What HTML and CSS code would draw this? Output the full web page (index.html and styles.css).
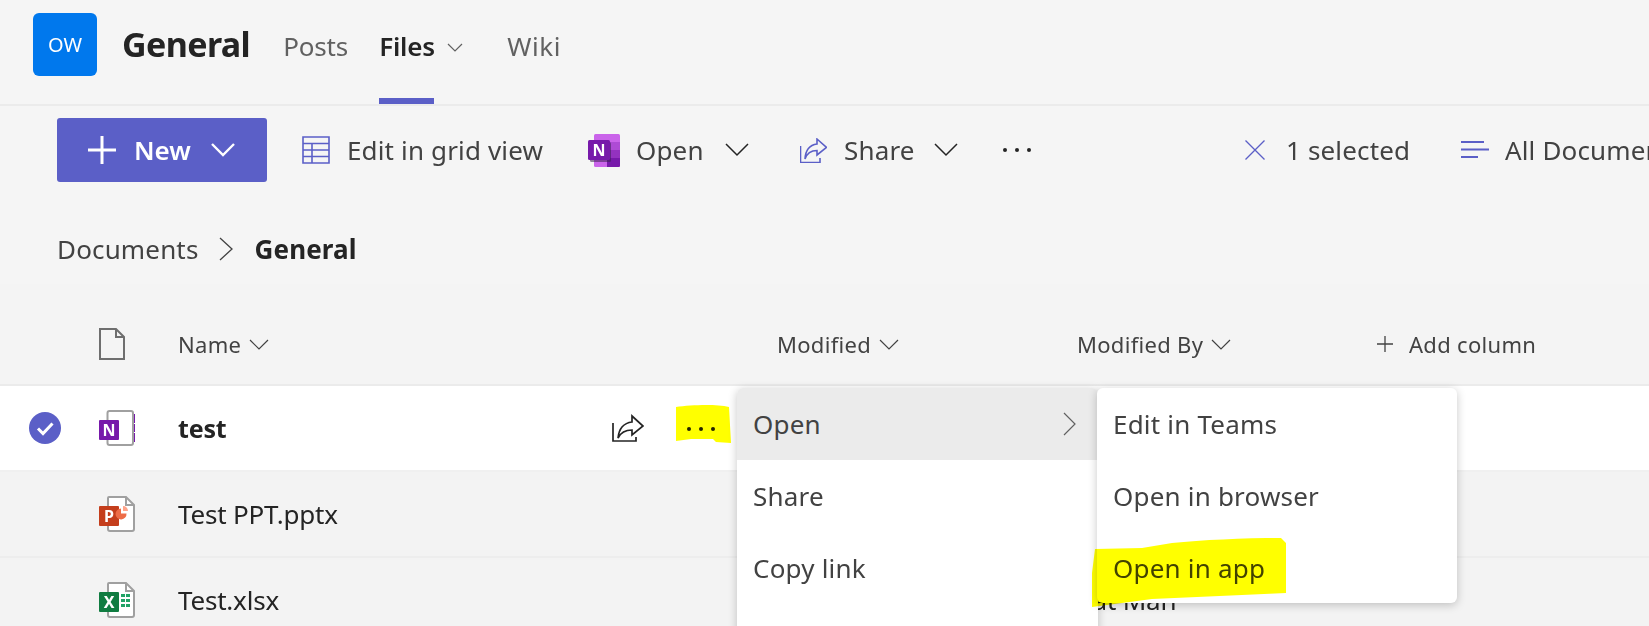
FILE: index.html
```html
<!DOCTYPE html>
<html lang="en">
<head>
<meta charset="utf-8">
<title>General - Files</title>
<link rel="stylesheet" href="styles.css">
</head>
<body>
<div class="page">
  <header class="tabs">
    <div class="avatar">OW</div>
    <h1 class="channel">General</h1>
    <nav class="tablist">
      <a class="tab tab-posts">Posts</a>
      <a class="tab tab-files">Files
        <svg class="tab-chevron" viewBox="0 0 16 9"><path d="M1 1l7 7 7-7"/></svg>
      </a>
      <a class="tab tab-wiki">Wiki</a>
    </nav>
  </header>

  <div class="toolbar">
    <button class="new-btn">
      <svg class="new-plus" viewBox="0 0 28 28"><path d="M14 0v28M0 14h28"/></svg>
      <span>New</span>
      <svg class="new-chevron" viewBox="0 0 24 14"><path d="M1 1l11 11L23 1"/></svg>
    </button>
    <div class="cmd cmd-grid">
      <svg class="ic-grid" viewBox="0 0 28 28"><path d="M1 1h26v26H1zM1 7.500h26M1 14h26M1 20.500h26M10 7.500V27"/></svg>
      <span>Edit in grid view</span>
    </div>
    <div class="cmd cmd-open">
      <svg class="ic-onenote" viewBox="0 0 32 33">
        <rect x="6" y="0" width="26" height="33" rx="1.500" fill="#ca64ea"/>
        <rect x="19" y="8" width="13" height="8" fill="#ae4bd5"/>
        <rect x="19" y="16" width="13" height="8" fill="#9332bf"/>
        <path d="M19 24h13v7.500a1.500 1.500 0 0 1-1.500 1.500H19z" fill="#7719aa"/>
        <rect x="2" y="8" width="21" height="20" rx="1.500" fill="#3a2050" opacity=".55"/>
        <rect x="0" y="6" width="22" height="20" rx="1.500" fill="#7719aa"/>
        <text class="badge-letter" x="11" y="22">N</text>
      </svg>
      <span>Open</span>
      <svg class="ic-chev" viewBox="0 0 24 14"><path d="M1 1l11 11L23 1"/></svg>
    </div>
    <div class="cmd cmd-share">
      <svg class="ic-share" viewBox="0 0 27 25"><path d="M.5 8v16.500H20V20M17 1l9.500 8.500L17 17v-4.500c-6 0-10 2.500-12 8.500 .5-9 5-14 12-15z"/></svg>
      <span>Share</span>
      <svg class="ic-chev" viewBox="0 0 24 14"><path d="M1 1l11 11L23 1"/></svg>
    </div>
    <div class="dots dots-bar"><i></i><i></i><i></i></div>
    <div class="cmd cmd-selected">
      <svg class="ic-x" viewBox="0 0 20 20"><path d="M.5.5l19 19M19.500.5l-19 19"/></svg>
      <span>1 selected</span>
    </div>
    <div class="cmd cmd-view">
      <svg class="ic-lines" viewBox="0 0 28 18"><path d="M0 1h23M0 8.500h28M0 16h17"/></svg>
      <span>All Documents</span>
    </div>
  </div>

  <div class="crumbs">
    <span>Documents</span>
    <svg class="crumb-sep" viewBox="0 0 14 24"><path d="M1 1l12 11L1 23"/></svg>
    <strong>General</strong>
  </div>

  <div class="grid grid-head">
    <div class="cell-check"></div>
    <div class="cell-icon">
      <svg class="ic-doc" viewBox="0 0 26 32"><path d="M1 1h16l8 8v22H1zM17 1v8h8"/></svg>
    </div>
    <div class="col">Name <svg class="col-chev" viewBox="0 0 20 11"><path d="M1 1l9 9 9-9"/></svg></div>
    <div class="col">Modified <svg class="col-chev" viewBox="0 0 20 11"><path d="M1 1l9 9 9-9"/></svg></div>
    <div class="col">Modified By <svg class="col-chev" viewBox="0 0 20 11"><path d="M1 1l9 9 9-9"/></svg></div>
    <div class="col col-add"><svg class="col-plus" viewBox="0 0 16 16"><path d="M8 0v16M0 8h16"/></svg> Add column</div>
  </div>

  <div class="grid row row-selected">
    <div class="cell-check">
      <svg class="ic-check" viewBox="0 0 32 32"><circle cx="16" cy="16" r="16" fill="#5b5fc7"/><path d="M9 16.500l5 5 9.500-10" fill="none" stroke="#fff" stroke-width="3"/></svg>
    </div>
    <div class="cell-icon">
      <svg class="ic-file" viewBox="0 0 36 36">
        <path d="M34 4h2v9h-2zM34 14h2v8h-2zM34 23h2v9h-2z" fill="#7719aa"/>
        <rect x="8.500" y="1" width="25.500" height="34" rx="2" fill="#fff" stroke="#a0a0a0" stroke-width="2"/>
        <rect x="0" y="10" width="20" height="20" rx="1" fill="#7719aa"/>
        <text class="badge-letter" x="10" y="26">N</text>
      </svg>
    </div>
    <div class="name-cell">
      <div class="name name-strong">test</div>
      <svg class="ic-share-dark" viewBox="0 0 32 28"><path d="M1 9v18h23v-4M20 2l11 10-11 9v-5c-7 0-11 2-14 8 1-10 6-15 14-16z"/></svg>
      <div class="dots dots-row"><i></i><i></i><i></i></div>
    </div>
    <div></div>
    <div></div>
  </div>

  <div class="grid row">
    <div class="cell-check"></div>
    <div class="cell-icon">
      <svg class="ic-file" viewBox="0 0 36 36">
        <path d="M9 2a1 1 0 0 1 1-1h17l8 8v24a2 2 0 0 1-2 2H11a2 2 0 0 1-2-2z" fill="#fff" stroke="#a0a0a0" stroke-width="2"/>
        <path d="M27 1v8h8" fill="none" stroke="#a0a0a0" stroke-width="2"/>
        <rect x="0" y="10" width="20" height="20" rx="1" fill="#c43e1c"/>
        <text class="badge-letter" x="10" y="26">P</text>
        <path d="M27.500 17.500a5.500 5.500 0 1 1-5.500-5v5z" fill="#ed6c47"/>
        <path d="M24 10a5 5 0 0 1 5 5h-5z" fill="#ffa48a"/>
      </svg>
    </div>
    <div class="name">Test PPT.pptx</div>
    <div></div><div></div><div></div>
  </div>

  <div class="grid row">
    <div class="cell-check"></div>
    <div class="cell-icon">
      <svg class="ic-file" viewBox="0 0 36 36">
        <path d="M9 2a1 1 0 0 1 1-1h17l8 8v24a2 2 0 0 1-2 2H11a2 2 0 0 1-2-2z" fill="#fff" stroke="#a0a0a0" stroke-width="2"/>
        <path d="M27 1v8h8" fill="none" stroke="#a0a0a0" stroke-width="2"/>
        <rect x="0" y="10" width="20" height="20" rx="1" fill="#107c41"/>
        <text class="badge-letter" x="10" y="26">X</text>
        <path d="M22 12h4v3h-4zM27 12h4v3h-4zM22 17h4v3h-4zM27 17h4v3h-4zM22 22h4v3h-4zM27 22h4v3h-4z" fill="#21a366"/>
      </svg>
    </div>
    <div class="name">Test.xlsx</div>
    <div></div>
    <div class="name">Pat Man</div>
    <div></div>
  </div>

  <svg class="mark mark-dots" viewBox="0 0 55 38"><path d="M0 2C15 0 40-1 53 2L55 38 40 37 37 34H15L0 36z"/></svg>

  <ul class="menu menu-main">
    <li class="item item-active">Open
      <svg class="item-chev" viewBox="0 0 13 24"><path d="M1 1l11 11L1 23"/></svg>
    </li>
    <li class="item">Share</li>
    <li class="item">Copy link</li>
    <li class="item"></li>
  </ul>

  <ul class="menu menu-sub">
    <li class="item">Edit in Teams</li>
    <li class="item">Open in browser</li>
    <li class="item">Open in app</li>
  </ul>

  <svg class="mark mark-app" viewBox="0 0 194 70"><path d="M3 12 50 11 80 6C110 3 150 1 189 1L194 6V56L150 58 60 62 30 66 0 70V36z"/></svg>
</div>
</body>
</html>
```
FILE: styles.css
```css
* { box-sizing: border-box; }
html, body { margin: 0; padding: 0; }
body {
  width: 1649px;
  height: 626px;
  overflow: hidden;
  background: #f5f5f5;
  font-family: "Noto Sans", "Open Sans", sans-serif;
  color: #424242;
}
svg { display: block; flex: none; fill: none; }
.page { position: relative; width: 1649px; height: 626px; overflow: hidden; }

.tabs {
  display: flex;
  height: 106px;
  padding: 13px 0 0 33px;
  border-bottom: 2px solid #ebebeb;
}
.avatar {
  width: 64px;
  height: 63px;
  border-radius: 6px;
  background: #0078ed;
  color: #fff;
  font-size: 20px;
  line-height: 63px;
  text-align: center;
}
.channel {
  margin: 2px 0 0 25px;
  font-size: 34px;
  font-weight: 700;
  line-height: 58px;
  color: #242424;
  letter-spacing: -.6px;
}
.tablist { display: flex; height: 91px; margin-left: 33px; }
.tab {
  display: block;
  height: 91px;
  font-size: 26px;
  line-height: 67px;
  color: #616161;
  white-space: nowrap;
  letter-spacing: -.2px;
}
.tab-posts { width: 96px; }
.tab-files {
  position: relative;
  display: flex;
  width: 128px;
  color: #242424;
  font-weight: 600;
  gap: 12px;
}
.tab-files::after {
  content: "";
  position: absolute;
  left: 0;
  bottom: 0;
  width: 55px;
  height: 6px;
  background: #5b5fc7;
}
.tab-chevron { width: 16px; height: 9px; margin-top: 30px; stroke: #616161; stroke-width: 1.200; }
.tab-wiki { letter-spacing: .6px; }

.toolbar {
  display: flex;
  align-items: center;
  height: 64px;
  margin-top: 12px;
  padding-left: 57px;
  font-size: 26px;
  white-space: nowrap;
}
.toolbar > * { flex: none; }
.new-btn {
  display: flex;
  align-items: center;
  width: 210px;
  height: 64px;
  padding: 0 0 0 31px;
  border: 0;
  border-radius: 3px;
  background: #5b5fc7;
  color: #fff;
  font: 600 26px "Noto Sans", sans-serif;
}
.new-plus { width: 28px; height: 28px; stroke: #fff; stroke-width: 3; }
.new-btn span { margin-left: 18px; width: 59px; text-align: left; }
.new-chevron { width: 24px; height: 14px; margin-left: 18px; stroke: #fff; stroke-width: 2.400; }

.cmd { display: flex; align-items: center; letter-spacing: .15px; }
.cmd-grid { margin-left: 35px; width: 286px; }
.ic-grid { width: 28px; height: 28px; stroke: #5b5fc7; stroke-width: 1.600; margin-right: 17px; }
.cmd-open { width: 212px; }
.ic-onenote { width: 32px; height: 33px; margin-right: 16px; }
.badge-letter {
  fill: #fff;
  font: 700 16px "Noto Sans", sans-serif;
  letter-spacing: 0;
  text-anchor: middle;
}
.ic-chev { width: 24px; height: 14px; stroke: #242424; stroke-width: 1.500; }
.cmd-open .ic-chev { margin-left: 21px; }
.cmd-share { width: 203px; }
.ic-share { width: 27px; height: 25px; stroke: #5b5fc7; stroke-width: 1.600; margin-right: 17px; }
.cmd-share .ic-chev { margin-left: 19px; }
.dots { display: flex; gap: 8px; align-items: center; }
.dots i { display: block; width: 4px; height: 4px; border-radius: 50%; background: #242424; }
.dots-bar { width: 242px; }
.ic-x { width: 20px; height: 20px; stroke: #5b5fc7; stroke-width: 1.300; margin-right: 21px; }
.cmd-selected { width: 216px; }
.ic-lines { width: 28px; height: 18px; stroke: #5b5fc7; stroke-width: 2; margin-right: 16px; }

.crumbs {
  display: flex;
  align-items: center;
  height: 70px;
  margin-top: 32px;
  padding-left: 57px;
  font-size: 26px;
  letter-spacing: .15px;
  color: #424242;
}
.crumb-sep { width: 14px; height: 24px; margin: 0 22px 0 20px; stroke: #424242; stroke-width: 1.300; }
.crumbs strong { color: #242424; font-weight: 700; }

.grid {
  display: grid;
  grid-template-columns: 99px 79px 599px 300px 300px 1fr;
  align-items: center;
  font-size: 22px;
  letter-spacing: .3px;
}
.grid-head {
  height: 102px;
  padding-top: 20px;
  color: #424242;
  border-bottom: 2px solid #ebebeb;
  background: #f4f4f4;
}
.col { display: flex; align-items: center; gap: 8px; white-space: nowrap; }
.col-chev { width: 20px; height: 11px; stroke: #424242; stroke-width: 1.200; }
.col-plus { width: 16px; height: 16px; stroke: #424242; stroke-width: 1.300; margin-right: 8px; }
.ic-doc { width: 26px; height: 32px; stroke: #6e6e6e; stroke-width: 2; }

.row { height: 86px; background: #f3f3f3; border-bottom: 2px solid #ededed; font-size: 26px; }
.row-selected { background: #fff; border-bottom-color: #f0f0f0; }
.ic-file { width: 36px; height: 36px; }
.cell-check { padding-left: 29px; }
.ic-check { width: 32px; height: 32px; }
.name { color: #242424; white-space: nowrap; letter-spacing: -.2px; }
.name-strong { font-weight: 700; font-size: 25px; width: 434px; }
.name-cell { display: flex; align-items: center; }
.ic-share-dark { width: 32px; height: 28px; stroke: #242424; stroke-width: 1.700; }
.dots-row { margin-left: 43px; margin-top: 2px; }

.mark { position: absolute; fill: #ffff00; mix-blend-mode: multiply; }
.mark-dots { left: 676px; top: 405px; width: 55px; height: 38px; }
.mark-app { left: 1092px; top: 537px; width: 194px; height: 70px; z-index: 5; }

.menu {
  position: absolute;
  margin: 0;
  padding: 0;
  list-style: none;
  background: #fff;
  border-radius: 6px;
  box-shadow: 0 2px 10px rgba(0,0,0,.22);
  font-size: 26px;
  letter-spacing: .2px;
  color: #424242;
}
.menu-main { left: 737px; top: 388px; width: 361px; height: 260px; overflow: hidden; }
.menu-sub { left: 1097px; top: 388px; width: 360px; height: 215px; }
.item { position: relative; height: 72px; padding-left: 16px; line-height: 72px; }
.item-active { background: #ebebeb; }
.item-chev { position: absolute; left: 326px; top: 24px; width: 13px; height: 24px; stroke: #616161; stroke-width: 1.200; }
```
